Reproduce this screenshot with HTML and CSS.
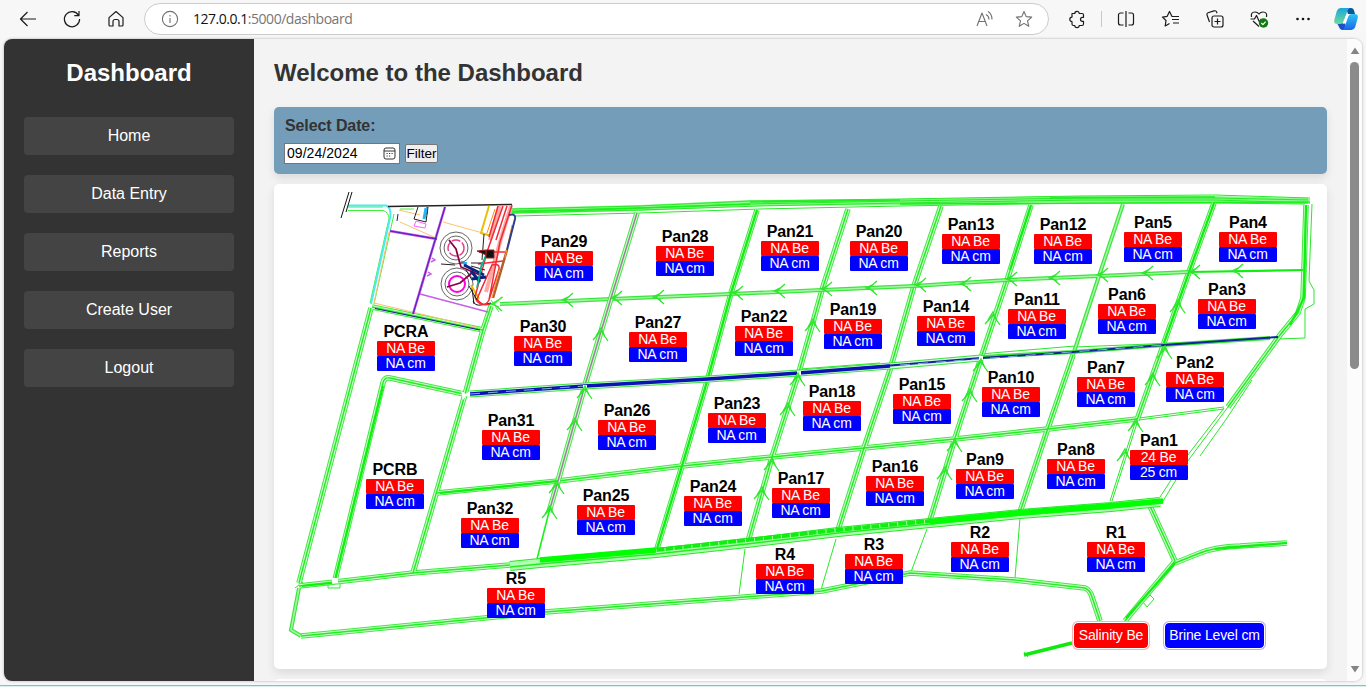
FILE: index.html
```html
<!DOCTYPE html>
<html lang="en">
<head>
<meta charset="utf-8">
<title>Dashboard</title>
<link rel="stylesheet" href="styles.css">
</head>
<body>
<header class="toolbar">
  <span class="tool"><svg viewBox="0 0 20 20"><path d="M18 10H2.500M9.500 3 2.500 10l7 7"/></svg></span>
  <span class="tool"><svg viewBox="0 0 20 20"><path d="M16.500 6.200A7.600 7.600 0 1 0 17.600 10M17 2v4.700h-4.700"/></svg></span>
  <span class="tool"><svg viewBox="0 0 20 20"><path d="M3 8.600 10 2.500l7 6.100V16a1 1 0 0 1-1 1h-3v-4.500a2 2 0 0 0-2-2h-2a2 2 0 0 0-2 2V17H4a1 1 0 0 1-1-1z"/></svg></span>
  <div class="address">
    <svg class="info" viewBox="0 0 20 20"><circle cx="10" cy="10" r="7.600"/><path d="M10 9v5M10 6v1.400"/></svg>
    <span class="url"><b>127.0.0.1</b>:5000/dashboard</span>
    <svg class="addr-icon" viewBox="0 0 20 20"><path d="M2 17 7 4l5 13M4 12.500h6M11 5.500q3 1.500 3 5M13 2.500q4 2.500 4 8"/></svg>
    <svg class="addr-icon" viewBox="0 0 20 20"><path d="m10 2.500 2.200 5.100 5.500.5-4.200 3.700 1.300 5.500-4.800-2.900-4.800 2.900 1.300-5.500L2.300 8.100l5.500-.5z"/></svg>
  </div>
  <span class="tool"><svg viewBox="0 0 20 20"><path d="M5 4.500h2.800a2.200 2.200 0 0 1 4.400 0H15a1.500 1.500 0 0 1 1.500 1.500v2.300h-1a2 2 0 0 0 0 4h1V15a1.500 1.500 0 0 1-1.500 1.500h-2.800a2.200 2.200 0 0 1-4.400 0H6.500A1.500 1.500 0 0 1 5 15v-2.500a2.200 2.200 0 0 1 0-4.400z"/></svg></span>
  <span class="divider"></span>
  <span class="tool"><svg viewBox="0 0 20 20"><path d="M7.500 4h-3a2 2 0 0 0-2 2v8a2 2 0 0 0 2 2h3M12.500 4h3a2 2 0 0 1 2 2v8a2 2 0 0 1-2 2h-3M10 2v16"/></svg></span>
  <span class="tool wide"><svg viewBox="0 0 20 20"><path d="M13 7.500h-2L8.500 2.500 6.200 7.300l-4.700.8L5 11.500 4.200 17l4.300-2.500M11 10.500h7M12 14h6M13 7.500h5"/></svg></span>
  <span class="tool"><svg viewBox="0 0 20 20"><rect x="7" y="7" width="11" height="11" rx="2"/><path d="M12.500 9.500v6M9.500 12.500h6M4.500 13 2 6q-.5-1.500 1-2.200l6-1.900q2-.6 2.600 1l.4 1.300"/></svg></span>
  <span class="tool"><svg viewBox="0 0 20 20"><path d="M2.500 8Q1.500 3 6 3q2.500 0 4 2 1.500-2 4-2 4.500 0 3.500 5M1.500 10h4l2-3.500 3 6.500 1.800-3M4 12l6 5.500"/><circle class="ok" cx="14.500" cy="14" r="4.700"/><path class="tick" d="m12.300 14 1.600 1.600 2.800-3"/></svg></span>
  <span class="tool"><svg viewBox="0 0 20 20"><g class="solid"><circle cx="4.500" cy="10" r="1.300"/><circle cx="10" cy="10" r="1.300"/><circle cx="15.500" cy="10" r="1.300"/></g></svg></span>
  <span class="tool last"><svg class="copilot" viewBox="0 0 24 24">
    <defs>
      <linearGradient id="ca" x1="0" y1="0" x2="0" y2="1"><stop offset="0" stop-color="#18a6dd"/><stop offset="1" stop-color="#6fdc9a"/></linearGradient>
      <linearGradient id="cb" x1="0" y1="0" x2="0" y2="1"><stop offset="0" stop-color="#2cc4f4"/><stop offset="1" stop-color="#1a66e8"/></linearGradient>
    </defs>
    <path d="M12 1h5q2.500 0 3.200 3L21 7h-7z" fill="#0b559b"/>
    <path d="M3 16h8l2 7H8q-2 0-3-3z" fill="#1c4fc8"/>
    <path d="M6.500 1H16q-2 .5-3 4l-3 9q-1 3-4 3H3q-3.500 0-2.700-4l2.500-9Q4 1 6.500 1z" fill="url(#ca)"/>
    <path d="M17.500 23H8q2-.5 3-4l3-9q1-3 4-3h3q3.500 0 2.700 4l-2.500 9q-1.200 3-3.700 3z" fill="url(#cb)"/>
    <path d="m12.300 7.500 2.700-.5-3.800 9.500-2.700.3z" fill="#fff"/>
  </svg></span>
</header>

<div class="viewport">
  <aside class="sidebar">
    <h2>Dashboard</h2>
    <nav class="menu">
      <a>Home</a><a>Data Entry</a><a>Reports</a><a>Create User</a><a>Logout</a>
    </nav>
  </aside>

  <main class="content">
    <h2>Welcome to the Dashboard</h2>
    <section class="filter">
      <div class="filter-label">Select Date:</div>
      <div class="filter-row">
        <span class="date">09/24/2024<svg viewBox="0 0 13 13"><rect x="1" y="1" width="11" height="11" rx="2"/><path d="M1 4h11M3.500 6.500h1.200M6 6.500h1.200M8.500 6.500h1.200M3.500 9h1.200M6 9h1.200"/></svg></span>
        <button class="apply">Filter</button>
      </div>
    </section>

    <section class="map">
      <svg class="plan" viewBox="274 184 1053 485">
        <defs>
          <g id="roads">
            <path d="M371 308 299 583M491 306 483 330 466 391 413 573M335 580 383 383Q384 377 390 378L464 394M372 307 483 330"/>
            <path d="M848 209 822 290 799 372 772 457 747 545M941 206 914 286 890 370 864 448 838 530"/>
            <path d="M757 210 731 293 708 378 682 466 656 552M1031 205 1007 280 981 358 955 438 930 520"/>
            <path d="M1073 355 1048 428 1020 512M1214 203 1189 272 1164 343 1137 420"/>
            <path d="M437 493 558 481 682 466 772 457 864 448 955 439 1048 429 1137 419"/>
            <path d="M299 586 335 582 413 573 510 565M301 636 545 612 745 597 822 591 910 573 1015 580 1085 588Q1090 590 1092 597L1100 621"/>
            <path d="M1150 506 1175 561 1125 621M1175 563 1200 553Q1215 547 1240 546L1287 543M1306 205 1304 270 1303 298 1298 313 1280 335 1228 407"/>
          </g>
          <g id="narrow-roads">
            <path d="M500 304 611 299 731 294 822 290 914 286 1007 280 1099 276 1189 272M1123 204 1099 276 1073 355M299 588 291 630 301 636"/>
          </g>
          <g id="purple-roads"><path d="M637 213 611 298 585 385 558 481 549 512"/></g>
          <path id="up" d="M-8 9 0 0 7 10M-5 5 0-3 4 6"/>
          <path id="left" d="M8-7 0 0 8 7M5-4-3 0 5 3"/>
        </defs>

        <!-- perimeter dikes -->
        <path class="pale" d="M512 211 640 208 750 203 900 202 1080 199 1215 199 1308 201"/>
        <g class="line">
          <path d="M512 209 640 206 750 201 900 199 1080 196 1215 195 1310 198M512 211 640 208 750 204 900 201 1080 198 1215 198 1310 200M512 213 640 210 760 206 900 203 1080 200 1215 200 1310 203M515 216 640 213 760 209 900 206 1080 203 1215 203 1305 204"/>
          <path d="M1312 204 1309 281 1314 290 1314 304 1305 309 1305 338 1278 339M1228 407 1187 462 1163 501M1224 408 1184 460 1160 497M1227 418 1200 456M1252 380 1227 418M1138 420 1112 501M1136 420 1110 501M1139 420 1224 409M1139 418 1224 407"/>
          <path d="M745 549 739 594M836 539 821 590M927 529 911 572M1020 518 1015 578"/>
          <path d="M800 369 880 363M980 354 1075 346M1075 347 1200 342M295 588 303 582M328 582v6h12v-6M1143 602l7-7 4 4-7 8zM1024 652l4 5M1088 588l4 5"/>
        </g>
        <path class="blade" d="M510 212 640 208M560 211 750 204M750 202 900 200M900 204 1310 202M1050 198 1215 197M549 512 537 559"/>
        <use href="#roads" class="edge"/><use href="#roads" class="fill"/><use href="#roads" class="centre"/>
        <use href="#narrow-roads" class="narrow-edge"/><use href="#narrow-roads" class="narrow-fill"/>
        <use href="#purple-roads" class="edge"/><use href="#purple-roads" class="fill"/><use href="#purple-roads" class="violet"/>
        <path class="strong" d="M757 210 731 293 708 378 682 466 656 552M1214 203 1189 272 1164 343M1189 272 1303 270M1306 205 1304 298 1290 325M383 386 335 580M1175 563 1126 618M1215 549 1287 543M440 493 558 481M302 586 332 583M1031 205 1010 270"/>
        <path class="outfall" d="M1024 655 1072 643"/>
        <g>
          <path class="dike-edge" d="M510 566 540 563 656 553 747 543 838 532 930 523 1020 514 1111 507 1160 502"/>
          <path class="dike-fill" d="M510 566 540 563 656 553 747 543 838 532 930 523 1020 514 1111 507 1160 502"/>
          <path class="centre" d="M510 567 540 564 656 554 747 544 838 533 930 524 1020 515 1111 508"/>
          <path class="dike-core" d="M540 560 656 550 747 540 838 530 930 521 1020 512 1111 505 1163 501"/>
          <path class="dike-strong" d="M540 560 656 550M930 522 1020 513 1111 506 1163 501"/>
        </g>

        <!-- feed canal -->
        <path class="canal-edge" d="M470 394 585 386 708 379 799 373 890 366 981 358"/>
        <path class="canal-fill" d="M470 394 585 386 708 379 799 373 890 366 981 358"/>
        <path class="narrow-edge" d="M981 357 1073 352 1164 345 1270 338"/>
        <path class="canal-thin" d="M860 368 981 358 1073 352 1164 345 1278 337"/>
        <path class="canal" d="M470 394 585 386 708 379 799 373 890 366"/>
        <path class="canal-dash" d="M470 394 585 386M900 365 1164 345"/>
        <path class="node" d="M461 391l5 3 4-3v6l-4-1-3 4zM583 385h4v3h-4zM797 371h4v4h-4zM979 356h4v4h-4zM332 578h6v5h-6z"/>

        <g class="flow">
          <use href="#left" x="565" y="300"/><use href="#left" x="614" y="298"/><use href="#left" x="656" y="297"/><use href="#left" x="735" y="293"/><use href="#left" x="777" y="291"/><use href="#left" x="824" y="289"/><use href="#left" x="869" y="288"/><use href="#left" x="918" y="285"/><use href="#left" x="963" y="284"/><use href="#left" x="1009" y="279"/><use href="#left" x="1052" y="278"/><use href="#left" x="1100" y="275"/><use href="#left" x="1145" y="273"/><use href="#left" x="1192" y="272"/><use href="#left" x="1235" y="271"/><use href="#left" x="494" y="304"/>
          <use href="#up" x="601" y="331"/><use href="#up" x="585" y="389"/><use href="#up" x="575" y="421"/><use href="#up" x="557" y="484"/><use href="#up" x="550" y="509"/>
          <use href="#up" x="813" y="322"/><use href="#up" x="798" y="376"/><use href="#up" x="788" y="406"/><use href="#up" x="772" y="461"/><use href="#up" x="762" y="490"/>
          <use href="#up" x="993" y="315"/><use href="#up" x="981" y="362"/><use href="#up" x="970" y="392"/><use href="#up" x="955" y="442"/><use href="#up" x="945" y="470"/>
          <use href="#up" x="1178" y="303"/><use href="#up" x="1165" y="349"/><use href="#up" x="1153" y="376"/><use href="#up" x="1136" y="422"/><use href="#up" x="1125" y="452"/>
        </g>

        <!-- plant area -->
        <g class="plant">
          <path stroke="#3df03d" d="M348 207h35M348 210.500h35q6 2 6 8L370 303M394 214 374 304M400 209h14M493 304l10-7M491 300l8 12M488 306l10-6"/>
          <path stroke="#4deaf2" stroke-width="2" d="M348 205.500H386Q392 208 390 218L371 304"/>
          <path stroke="#ffc070" d="M389 232 374 303 480 328M443 222 490 235M436 237 420 294M399 210 420 215M400 222 436 238"/>
          <path stroke="#222" stroke-width="1.500" d="M388 206.500 512 204.500"/>
          <path stroke="#111" d="M349 192 341 218M352 192 346 212M473 301q2 5 8 4l10-2M472 288 474 304"/>
          <path stroke="#1c1c90" d="M398 214 397 221M424 214h3v-7M375 308.500 480 330"/>
          <path stroke="#c04de0" stroke-width="2.500" d="M390 231 437 239M445 207 413 314"/>
          <path stroke="#c560e8" stroke-width="1.500" d="M420 294 488 312M432 258l3 2-4 2M428 272l3 2-4 2"/>
          <path stroke="#4a20c0" d="M445 207 413 314M390 231 437 239"/>
          <path stroke="#222" d="M418 207 414 219 426 222 428 207"/>
          <path stroke="#ff60ff" d="M416 221 426 224 425 228 414 226z"/>
          <path stroke="#20b8f0" stroke-width="3" d="M426 208 424 219M461 262 467 264"/>
          <g stroke="#555" stroke-width=".9"><circle cx="456" cy="248" r="16"/><circle cx="456" cy="248" r="12"/><circle cx="457" cy="284" r="16"/><circle cx="457" cy="284" r="12"/></g>
          <circle cx="456" cy="248" r="8" stroke="#e04090" stroke-width="1.500" stroke-dasharray="9 2"/>
          <circle cx="457" cy="284" r="8" stroke="#ff00e0" stroke-width="2"/>
          <path stroke="#8b0040" stroke-width="1.700" d="M449 240 456 249 461 267 480 275M447 287 460 283 473 272M456 249 460 264"/>
          <path stroke="#e8c000" stroke-width="2" d="M489 206 481 233 491 236 499 206M471 285 479 299"/>
          <path stroke="#ffa8a0" stroke-width="4" d="M500 206 490 240M511 206 500 242 486 292"/>
          <path stroke="#f22a3a" stroke-width="1.500" d="M498 206 489 237M503 206 487 252 475 297Q478 307 490 304M512 205 500 242 489 300M507 206 496 240M479 252 505 252M478 264 503 261M492 265Q500 263 499 269L489 300Q484 309 477 299z"/>
          <path stroke="#b06030" stroke-width="2.500" d="M507 250 493 298"/>
          <path stroke="#ff9020" d="M499 270 492 298M512 225 505 258M495 209 487 233"/>
          <path stroke="#303c90" stroke-width="2" d="M509 215Q516 213 515 219L507 250"/>
          <path stroke="#0a2280" stroke-width="3" d="M464 265 484 275M472 279 486 277M471 271 480 282"/>
          <path stroke="#222" d="M484 234 482 260M471 263h12M471 266 485 270M469 286 477 300M472 280 466 270M441 264 455 265"/>
          <path stroke="#00b890" stroke-width="1.700" d="M482 262 477 288M486 255 480 270"/>
          <path fill="#111" stroke="#9d2020" d="M486 250h8v8h-8zM477 251l9-1v5z"/>
        </g>
      </svg>

      <div class="pin" style="left:261px;top:49px"><b>Pan29</b><i>NA Be</i><u>NA cm</u></div>
      <div class="pin" style="left:382px;top:44px"><b>Pan28</b><i>NA Be</i><u>NA cm</u></div>
      <div class="pin" style="left:487px;top:39px"><b>Pan21</b><i>NA Be</i><u>NA cm</u></div>
      <div class="pin" style="left:576px;top:39px"><b>Pan20</b><i>NA Be</i><u>NA cm</u></div>
      <div class="pin" style="left:668px;top:32px"><b>Pan13</b><i>NA Be</i><u>NA cm</u></div>
      <div class="pin" style="left:760px;top:32px"><b>Pan12</b><i>NA Be</i><u>NA cm</u></div>
      <div class="pin" style="left:850px;top:30px"><b>Pan5</b><i>NA Be</i><u>NA cm</u></div>
      <div class="pin" style="left:945px;top:30px"><b>Pan4</b><i>NA Be</i><u>NA cm</u></div>
      <div class="pin" style="left:240px;top:134px"><b>Pan30</b><i>NA Be</i><u>NA cm</u></div>
      <div class="pin" style="left:355px;top:130px"><b>Pan27</b><i>NA Be</i><u>NA cm</u></div>
      <div class="pin" style="left:461px;top:124px"><b>Pan22</b><i>NA Be</i><u>NA cm</u></div>
      <div class="pin" style="left:550px;top:117px"><b>Pan19</b><i>NA Be</i><u>NA cm</u></div>
      <div class="pin" style="left:643px;top:114px"><b>Pan14</b><i>NA Be</i><u>NA cm</u></div>
      <div class="pin" style="left:734px;top:107px"><b>Pan11</b><i>NA Be</i><u>NA cm</u></div>
      <div class="pin" style="left:824px;top:102px"><b>Pan6</b><i>NA Be</i><u>NA cm</u></div>
      <div class="pin" style="left:924px;top:97px"><b>Pan3</b><i>NA Be</i><u>NA cm</u></div>
      <div class="pin" style="left:103px;top:139px"><b>PCRA</b><i>NA Be</i><u>NA cm</u></div>
      <div class="pin" style="left:208px;top:228px"><b>Pan31</b><i>NA Be</i><u>NA cm</u></div>
      <div class="pin" style="left:324px;top:218px"><b>Pan26</b><i>NA Be</i><u>NA cm</u></div>
      <div class="pin" style="left:434px;top:211px"><b>Pan23</b><i>NA Be</i><u>NA cm</u></div>
      <div class="pin" style="left:529px;top:199px"><b>Pan18</b><i>NA Be</i><u>NA cm</u></div>
      <div class="pin" style="left:619px;top:192px"><b>Pan15</b><i>NA Be</i><u>NA cm</u></div>
      <div class="pin" style="left:708px;top:185px"><b>Pan10</b><i>NA Be</i><u>NA cm</u></div>
      <div class="pin" style="left:803px;top:175px"><b>Pan7</b><i>NA Be</i><u>NA cm</u></div>
      <div class="pin" style="left:892px;top:170px"><b>Pan2</b><i>NA Be</i><u>NA cm</u></div>
      <div class="pin" style="left:92px;top:277px"><b>PCRB</b><i>NA Be</i><u>NA cm</u></div>
      <div class="pin" style="left:187px;top:316px"><b>Pan32</b><i>NA Be</i><u>NA cm</u></div>
      <div class="pin" style="left:303px;top:303px"><b>Pan25</b><i>NA Be</i><u>NA cm</u></div>
      <div class="pin" style="left:410px;top:294px"><b>Pan24</b><i>NA Be</i><u>NA cm</u></div>
      <div class="pin" style="left:498px;top:286px"><b>Pan17</b><i>NA Be</i><u>NA cm</u></div>
      <div class="pin" style="left:592px;top:274px"><b>Pan16</b><i>NA Be</i><u>NA cm</u></div>
      <div class="pin" style="left:682px;top:267px"><b>Pan9</b><i>NA Be</i><u>NA cm</u></div>
      <div class="pin" style="left:773px;top:257px"><b>Pan8</b><i>NA Be</i><u>NA cm</u></div>
      <div class="pin" style="left:856px;top:248px"><b>Pan1</b><i>24 Be</i><u>25 cm</u></div>
      <div class="pin" style="left:213px;top:386px"><b>R5</b><i>NA Be</i><u>NA cm</u></div>
      <div class="pin" style="left:482px;top:362px"><b>R4</b><i>NA Be</i><u>NA cm</u></div>
      <div class="pin" style="left:571px;top:352px"><b>R3</b><i>NA Be</i><u>NA cm</u></div>
      <div class="pin" style="left:677px;top:340px"><b>R2</b><i>NA Be</i><u>NA cm</u></div>
      <div class="pin" style="left:813px;top:340px"><b>R1</b><i>NA Be</i><u>NA cm</u></div>

      <div class="legend"><span class="salinity">Salinity Be</span><span class="brine">Brine Level cm</span></div>
    </section>
    <section class="next-card"></section>
  </main>

  <div class="scrollbar">
    <svg viewBox="0 0 10 8"><path d="M5 .5 9.300 7H.7z"/></svg>
    <span class="thumb"></span>
    <svg viewBox="0 0 10 8"><path d="M5 7.500.7 1h8.600z"/></svg>
  </div>
</div>
<footer class="taskbar-edge"></footer>
</body>
</html>
```
FILE: styles.css
```css
* { box-sizing: border-box; }
body {
  margin: 0;
  width: 1366px;
  height: 687px;
  overflow: hidden;
  display: flex;
  flex-direction: column;
  background: #f7f7f7;
  font-family: "Liberation Sans", Arial, sans-serif;
  color: #333;
}
.toolbar {
  flex: none;
  height: 39px;
  padding: 0 0 1px 6px;
  display: flex;
  align-items: center;
}
.tool { flex: none; width: 44px; display: flex; justify-content: center; }
.tool.wide { width: 45px; }
.tool.last { width: 42px; }
.toolbar svg { width: 20px; height: 20px; fill: none; stroke: #1b1b1b; stroke-width: 1.2; stroke-linejoin: round; }
.toolbar .solid { fill: #111; stroke: none; }
.toolbar .ok { fill: #107c10; stroke: none; }
.toolbar .tick { stroke: #fff; }
.toolbar .copilot { width: 24px; height: 24px; stroke: none; }
.address {
  flex: none;
  width: 905px;
  height: 32px;
  margin: 0 6px;
  padding: 0 14px 0 15px;
  display: flex;
  align-items: center;
  background: #fff;
  border: 1px solid #ccc;
  border-radius: 16px;
}
.toolbar .address svg { stroke: #707070; stroke-width: 1.1; }
.url {
  flex: 1;
  margin: 0 0 1px 13px;
  font: 14px "Open Sans", "Noto Sans", sans-serif;
  letter-spacing: -0.47px;
  color: #767676;
}
.url b { font-weight: 400; color: #111; }
.addr-icon + .addr-icon { margin-left: 19px; }
.divider { width: 1px; height: 16px; background: #c8c8c8; flex: none; margin: 0 2px; }

.viewport {
  flex: none;
  width: 1358px;
  height: 642px;
  margin-left: 4px;
  display: flex;
  overflow: hidden;
  background: #f3f3f3;
  border-radius: 8px;
  box-shadow: 0 0 2px 1px #d4d4d4;
}
.sidebar { width: 250px; padding: 20px; background: #333; color: #fff; text-align: center; }
.sidebar h2, .content h2 { margin: 0; font-size: 24px; line-height: 28px; }
.menu { margin-top: 30px; display: flex; flex-direction: column; gap: 20px; }
.menu a { height: 38px; line-height: 37px; font-size: 16px; background: #444; border-radius: 4px; }
.content { width: 1093px; padding: 20px; display: flex; flex-direction: column; }
.filter {
  flex: none;
  height: 67px;
  margin-top: 20px;
  padding: 9px 10px;
  background: #739db8;
  border-radius: 5px;
  box-shadow: 0 4px 8px rgba(0,0,0,.1);
}
.filter-label { font-weight: 700; font-size: 16px; line-height: 19px; padding-left: 1px; letter-spacing: -.1px; }
.filter-row { display: flex; align-items: center; gap: 5px; margin-top: 8px; }
.date {
  width: 116px;
  height: 21px;
  padding: 0 3px 1px 2px;
  display: flex;
  align-items: center;
  justify-content: space-between;
  background: #fff;
  border: 1px solid #767676;
  color: #000;
  font-size: 14px;
  letter-spacing: .05px;
}
.date svg { width: 13px; height: 13px; fill: none; stroke: #333; }
.apply {
  width: 33px;
  height: 19px;
  padding: 0;
  border: 1px solid #767676;
  border-radius: 2px;
  background: #efefef;
  color: #000;
  font: 13.6px/15px "Liberation Sans", Arial, sans-serif;
}

.map {
  flex: none;
  position: relative;
  height: 485px;
  margin-top: 10px;
  background: #fff;
  border-radius: 5px;
  box-shadow: 0 4px 10px rgba(0,0,0,.1);
}
.next-card { flex: none; height: 20px; margin-top: 10px; background: #fff; border-radius: 5px; }
.plan { display: block; width: 1053px; height: 485px; fill: none; }
.line { stroke: #2ae82a; stroke-width: 1; }
.flow { stroke: #2ee62e; stroke-width: 1.3; }
.pale { stroke: #8cf88c; stroke-width: 6; }
.blade { stroke: #1cf01c; stroke-width: 1.6; }
.edge { stroke: #40ea40; stroke-width: 5.6; }
.fill { stroke: #ccffcc; stroke-width: 3.6; }
.centre { stroke: #26ea26; stroke-width: 1.4; }
.narrow-edge { stroke: #3be63b; stroke-width: 4; }
.narrow-fill { stroke: #a4f6a4; stroke-width: 1.6; }
.violet { stroke: #a080a0; stroke-width: 1.5; }
.strong { stroke: #10f010; stroke-width: 2.2; }
.outfall { stroke: #10e810; stroke-width: 3.5; }
.dike-edge { stroke: #2be62b; stroke-width: 10; }
.dike-fill { stroke: #b0ffb0; stroke-width: 8; }
.dike-core { stroke: #0fef0f; stroke-width: 4; stroke-dasharray: 8 1; }
.dike-strong { stroke: #0f0; stroke-width: 5.5; }
.canal-edge { stroke: #3fe23f; stroke-width: 7; }
.canal-fill { stroke: #d4f8dc; stroke-width: 5; }
.canal { stroke: #0a14b4; stroke-width: 3.4; }
.canal-thin { stroke: #14239b; stroke-width: 2; }
.canal-dash { stroke: #7cb4e0; stroke-width: 1; stroke-dasharray: 10 8; }
.node { fill: #fff; }
.plant { stroke-width: 1; }

.pin {
  position: absolute;
  width: 58px;
  display: flex;
  flex-direction: column;
  text-align: center;
  color: #fff;
  font-size: 14px;
  letter-spacing: -.2px;
  line-height: 15px;
}
.pin b { font-size: 16px; line-height: 18px; letter-spacing: -.1px; color: #000; }
.pin i, .pin u { height: 15px; padding-right: 1px; font-style: normal; text-decoration: none; background: #f00; border-radius: 1px; }
.pin u { background: #00f; }
.legend {
  position: absolute;
  right: 63px;
  bottom: 21px;
  display: flex;
  gap: 17px;
  color: #fff;
  font-size: 14px;
  letter-spacing: -.15px;
  line-height: 25px;
  text-align: center;
}
.legend span { height: 25px; border-radius: 4px; outline: 1px solid #fff; }
.salinity { width: 74px; background: #f00; box-shadow: 0 0 0 2px #ffb0b0; }
.brine { width: 99px; background: #00f; box-shadow: 0 0 0 2px #b0b0ff; }

.scrollbar {
  width: 15px;
  padding: 8px 0;
  display: flex;
  flex-direction: column;
  align-items: center;
  background: #fcfcfc;
}
.scrollbar svg { width: 10px; height: 8px; fill: #858585; }
.thumb { width: 9px; height: 307px; margin: 7px 0 auto; border-radius: 5px; background: #8b8b8b; }
.taskbar-edge { flex: none; height: 2px; margin-top: 4px; background: #d9efee; border-top: 1px solid #8fbcbc; }
```
